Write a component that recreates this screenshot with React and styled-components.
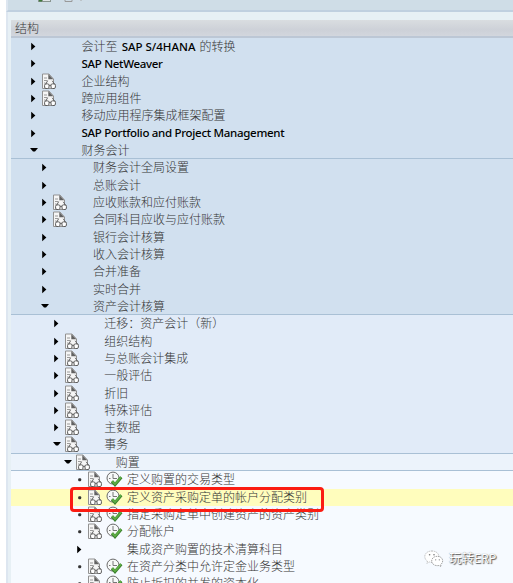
import React from 'react';
import styled, { createGlobalStyle } from 'styled-components';

const GlobalStyle = createGlobalStyle`
  * {
    box-sizing: border-box;
  }

  body {
    margin: 0;
    background: #fff;
    overflow: hidden;
  }
`
const Window = styled.div`
  position: relative;
  width: 513px;
  height: 583px;
  padding-left: 6px;
  overflow: hidden;
  font-family: "Noto Sans", "Noto Sans CJK SC", sans-serif;
  font-size: 12px;
  color: #363636;
`
const Toolbar = styled.div`
  height: 12px;
  display: flex;
  align-items: flex-start;
  padding-left: 30px;
  background: #cfdde7;
  border-left: 2px solid #dde6f0;
  border-bottom: 2px solid #c0d0e0;

  svg {
    display: block;
  }
`
const Body = styled.div`
  height: 571px;
  padding: 8px 0 0 3px;
  background: #e7f0f5;
  border-left: 2px solid #dde6f0;
`
const Header = styled.div`
  height: 18px;
  padding-left: 4px;
  line-height: 17px;
  font-weight: 300;
  background: linear-gradient(#d9dde0, #cdd1d8 55%, #d2d6dd 88%, #bcc7d5 89%);
`
const Tree = styled.div`
  height: 546px;
  overflow: hidden;
  background: #f6faff;
`
const Group = styled.div`
  background: ${props => props.$bg};
  border-bottom: ${props => props.$last ? 0 : '1px solid #a9c0d5'};
`
const Row = styled.div`
  height: ${props => props.$short ? '16.33px' : '17.333px'};
  display: flex;
  align-items: center;
  padding-left: ${props => 18 + props.$level * 11.4}px;
  background: ${props => props.$selected ? '#fffdbd' : 'transparent'};
`
const Marker = styled.div`
  width: 12px;
  height: 17px;
  flex: none;

  svg {
    display: block;
  }
`
const IconSlot = styled.div`
  width: ${props => props.$width}px;
  height: 17px;
  flex: none;

  svg {
    display: block;
  }
`
const Label = styled.span`
  white-space: pre;
  line-height: 17px;
  font-weight: 300;
`
const Latin = styled.span`
  position: relative;
  top: -0.5px;
  color: #000;
  font-weight: 500;
  font-size: 11.5px;
  letter-spacing: ${props => props.$spacing}px;
  margin: 0 ${props => props.$gap}px;
`
const Outline = styled.div`
  position: absolute;
  left: 70px;
  top: 487px;
  width: 254px;
  height: 25px;
  border: 3px solid #fb1c12;
  border-radius: 4px;
`
const Watermark = styled.div`
  position: absolute;
  left: 424px;
  top: 549px;
  display: flex;
  align-items: center;
  gap: 5px;
  height: 20px;
  line-height: 16px;
  font-size: 12.5px;
  color: #fff;
  text-shadow: 1px 1px 1px #555, 0 0 1px #777;

  svg {
    display: block;
  }
`

const ArrowIcon = ({ type }) => (
  <svg width="11" height="17" viewBox="0 0 11 17">
    {type === 'closed' && <path d="M2.2 4.7 L6.4 8.5 L2.2 12.3 Z" fill="#000" />}
    {type === 'open' && <path d="M1 6 H9 L6 9.5 H4 Z" fill="#000" />}
    {type === 'leaf' && <rect x="3.2" y="7.2" width="3" height="3" rx="1" fill="#333" />}
  </svg>
)

const DocIcon = () => (
  <svg width="17" height="17" viewBox="0 0 17 17" fill="none">
    <path d="M1.5 1 H8 L12.5 6 V15.5 H1.5 Z" fill="#f6f6f6" stroke="#929292" />
    <path d="M7.3 1 V6.3 H12.3 Z" fill="#626262" />
    <path d="M3 5 H6 M3 7.5 H6.5 M3 10 H4.5" stroke="#9a9a9a" />
    <path d="M4.2 12 L6.6 7.8 M14.2 12 L11.2 7.8" stroke="#666" />
    <rect x="3.6" y="10.9" width="4.4" height="4.6" rx="1.4" fill="#fff" stroke="#5c5c5c" />
    <rect x="10" y="10.9" width="4.4" height="4.6" rx="1.4" fill="#fff" stroke="#5c5c5c" />
    <path d="M8 12.3 H10" stroke="#5c5c5c" />
  </svg>
)

const ExecuteIcon = () => (
  <svg width="18" height="17" viewBox="0 0 18 17" fill="none">
    <circle cx="7" cy="7.1" r="6" fill="#f7f9f9" stroke="#6a6a6a" />
    <path d="M7 3 V7.5 H11 M3 7.5 H4.5" stroke="#777" />
    <path d="M6 10.3 L9 13.8 L15.3 6.3" stroke="#397d2c" strokeWidth="3" />
    <path d="M6.2 10.2 L9 13.2 L15.1 6.2" stroke="#5dad43" strokeWidth="1.8" />
  </svg>
)

const WechatIcon = () => (
  <svg width="20" height="18" viewBox="0 0 20 18">
    <path d="M8 1 C3.5 1 .8 3.5 .8 6.6 C.8 8.5 1.8 10 3.4 11.1 L2.8 13.3 L5.4 12 C10.8 13.2 14.9 10.5 14.9 6.8 C14.9 3.4 12 1 8 1 Z" fill="#fff" stroke="#888" strokeWidth=".6" strokeDasharray="1.2 1" />
    <path d="M13.3 6.3 C9.8 6.3 7.7 8.4 7.7 11 C7.7 14 11 16.3 15 15.5 L17.2 16.6 L16.6 14.7 C20.6 11.6 18.5 6.3 13.3 6.3 Z" fill="#fff" stroke="#666" strokeWidth=".6" strokeDasharray="1.5 .8" />
    <g fill="#777">
      <circle cx="5.6" cy="4.7" r=".8" />
      <circle cx="10" cy="4.7" r=".8" />
      <circle cx="11.7" cy="9.8" r=".6" />
      <circle cx="15.3" cy="9.8" r=".6" />
    </g>
  </svg>
)

const groups = [
  {
    level: 0,
    bg: '#d1e0ef',
    rows: [
      { type: 'closed', text: '会计至 ', latin: 'SAP S/4HANA', after: ' 的转换', gap: 1 },
      { type: 'closed', latin: 'SAP NetWeaver', spacing: -0.3 },
      { type: 'closed', doc: true, text: '企业结构' },
      { type: 'closed', doc: true, text: '跨应用组件' },
      { type: 'closed', text: '移动应用程序集成框架配置' },
      { type: 'closed', latin: 'SAP Portfolio and Project Management', spacing: -0.3 },
      { type: 'open', text: '财务会计' }
    ]
  },
  {
    level: 1,
    bg: '#d1e0ef',
    rows: [
      { type: 'closed', text: '财务会计全局设置' },
      { type: 'closed', text: '总账会计' },
      { type: 'closed', doc: true, text: '应收账款和应付账款' },
      { type: 'closed', doc: true, text: '合同科目应收与应付账款' },
      { type: 'closed', text: '银行会计核算' },
      { type: 'closed', text: '收入会计核算' },
      { type: 'closed', text: '合并准备' },
      { type: 'closed', text: '实时合并' },
      { type: 'open', text: '资产会计核算' }
    ]
  },
  {
    level: 2,
    bg: '#e1ebf8',
    rows: [
      { type: 'closed', text: '迁移：资产会计（新）' },
      { type: 'closed', doc: true, text: '组织结构' },
      { type: 'closed', doc: true, text: '与总账会计集成' },
      { type: 'closed', doc: true, text: '一般评估' },
      { type: 'closed', doc: true, text: '折旧' },
      { type: 'closed', doc: true, text: '特殊评估' },
      { type: 'closed', doc: true, text: '主数据' },
      { type: 'open', doc: true, text: '事务' }
    ]
  },
  {
    level: 3,
    bg: '#ecf3fb',
    rows: [{ type: 'open', doc: true, text: '购置' }]
  },
  {
    level: 4,
    bg: '#f6faff',
    rows: [
      { type: 'leaf', doc: true, exec: true, text: '定义购置的交易类型' },
      { type: 'leaf', doc: true, exec: true, selected: true, text: '定义资产采购定单的帐户分配类别' },
      { type: 'leaf', doc: true, exec: true, text: '指定采购定单中创建资产的资产类别' },
      { type: 'leaf', doc: true, exec: true, text: '分配帐户' },
      { type: 'closed', text: '集成资产购置的技术清算科目' },
      { type: 'leaf', doc: true, exec: true, text: '在资产分类中允许定金业务类型' },
      { type: 'leaf', doc: true, exec: true, text: '防止折扣的并发的资本化' }
    ]
  }
]

const TreeRow = ({ row, level, short }) => (
  <Row $level={level} $selected={row.selected} $short={short}>
    <Marker><ArrowIcon type={row.type} /></Marker>
    <IconSlot $width={row.exec ? 19 : 40.5}>{row.doc && <DocIcon />}</IconSlot>
    {row.exec && <IconSlot $width={21.5}><ExecuteIcon /></IconSlot>}
    <Label>
      {row.text}
      {row.latin && (
        <Latin $spacing={row.spacing || 0} $gap={row.gap || 0}>{row.latin}</Latin>
      )}
      {row.after}
    </Label>
  </Row>
)

export default function App() {
  return (
    <Window>
      <GlobalStyle />
      <Toolbar>
        <svg width="110" height="3" viewBox="0 0 110 3">
          <path d="M0 0 H13 V2 H0 Z" fill="#8a9590" />
          <path d="M1 0 H4 V1.5 H1 Z" fill="#3f7a3a" />
          <path d="M5 0 H12 V1 H5 Z" fill="#dfe5e6" />
          <path d="M27 0 V1.5 H34 V0" fill="none" stroke="#999" />
          <path d="M43 0 V1" stroke="#aaa" />
        </svg>
      </Toolbar>
      <Body>
        <Header>结构</Header>
        <Tree>
          {groups.map(group => (
            <Group key={group.level} $bg={group.bg} $last={group.level === 4}>
              {group.rows.map((row, i) => (
                <TreeRow
                  key={row.text || row.latin}
                  row={row}
                  level={group.level}
                  short={group.level < 4 && i === group.rows.length - 1}
                />
              ))}
            </Group>
          ))}
        </Tree>
      </Body>
      <Outline />
      <Watermark>
        <WechatIcon />
        玩转ERP
      </Watermark>
    </Window>
  )
}
